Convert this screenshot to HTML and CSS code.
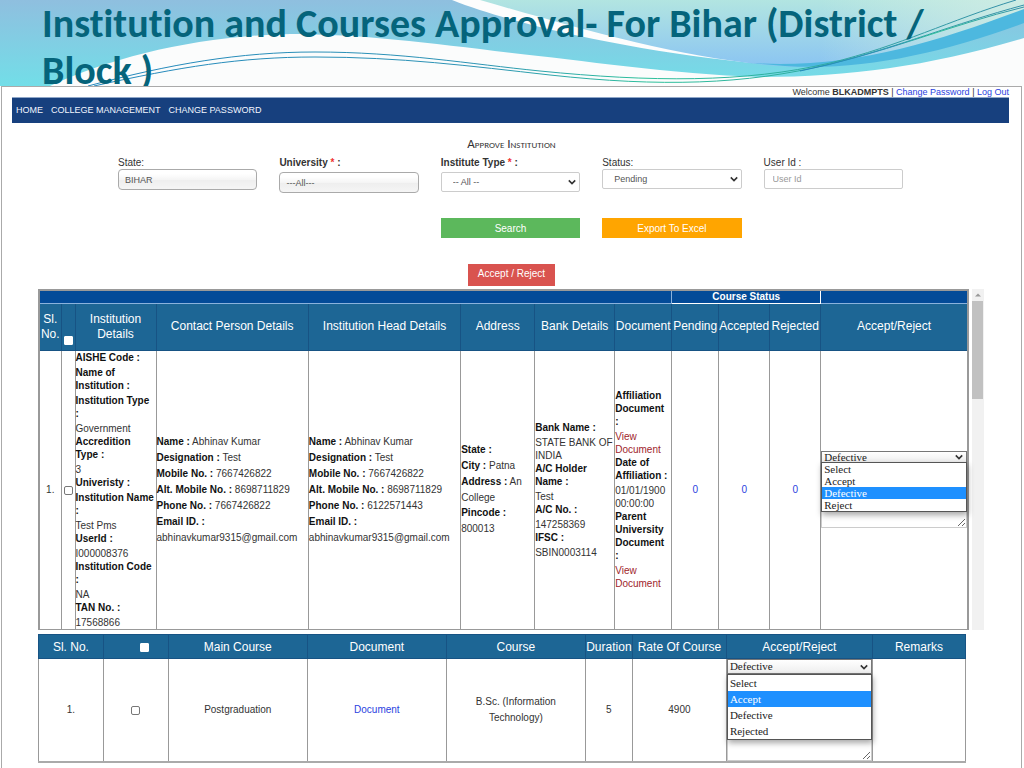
FILE: index.html
```html
<!DOCTYPE html>
<html lang="en">
<head>
<meta charset="utf-8">
<title>Institution and Courses Approval</title>
<link rel="stylesheet" href="styles.css">
</head>
<body>
<header class="banner">
  <svg class="banner-art" viewBox="0 0 1024 86" preserveAspectRatio="none" aria-hidden="true">
    <defs>
      <linearGradient id="sea" x1="0" y1="0" x2="0" y2="1"><stop offset="0" stop-color="#8fbfdf"/><stop offset="1" stop-color="#72dee8"/></linearGradient>
      <linearGradient id="sky" x1="0" y1="0" x2="0" y2="1"><stop offset="0" stop-color="#b2e5e1"/><stop offset="1" stop-color="#8ac4f2"/></linearGradient>
      <linearGradient id="pale" x1="0" y1="0" x2="1" y2="0"><stop offset="0" stop-color="#d9f0e2" stop-opacity="0"/><stop offset="1" stop-color="#d4eee4" stop-opacity=".8"/></linearGradient>
      <linearGradient id="line" x1="0" y1="0" x2="1" y2="0"><stop offset="0" stop-color="#2488bd"/><stop offset=".42" stop-color="#2c93b4"/><stop offset=".6" stop-color="#2cc09a"/><stop offset="1" stop-color="#348fa8"/></linearGradient>
    </defs>
    <path fill="url(#sea)" d="M0 0H1024V38C930 66 850 77 760 77C670 74 580 60 512 53C430 43 360 34 290 34C200 36 115 56 50 86H0Z"/>
    <path fill="#fdfdfd" d="M452 0C520 27 640 52 760 64L800 60L520 0Z"/>
    <path fill="url(#sky)" d="M480 0H1024V12C940 46 880 66 800 67C700 64 580 29 480 0Z"/>
    <path fill="url(#pale)" d="M820 0H1024V10C970 30 900 56 820 64Z"/>
    <path fill="#4db8df" d="M750 63C850 69 930 44 1024 9V23C940 54 860 71 785 66Z"/>
    <g fill="none" stroke="url(#line)" stroke-width="1">
      <path d="M88 86C170 64 240 52 315 52C400 52 470 64 540 71C650 82 745 83 830 63C900 46 950 20 1016 0"/>
      <path d="M94 86C180 67 240 57 315 57C400 57 470 66 550 75C660 87 745 85 830 64C905 45 950 25 1024 5"/>
      <path d="M800 71C880 55 950 25 1024 7"/>
    </g>
  </svg>
  <h1 class="banner-title">Institution and Courses Approval- For Bihar (District /<br>Block )</h1>
</header>

<main class="panel">
  <div class="account">Welcome <b>BLKADMPTS</b> | <a href="#">Change Password</a> | <a href="#">Log Out</a></div>
  <nav class="menu"><a href="#">HOME</a><a href="#">COLLEGE MANAGEMENT</a><a href="#">CHANGE PASSWORD</a></nav>
  <h2 class="section-title">Approve Institution</h2>

  <form class="filters">
    <div class="field"><label for="state">State:</label>
      <select id="state" class="control chosen"><option>BIHAR</option></select></div>
    <div class="field required"><label for="university">University <i>*</i> :</label>
      <select id="university" class="control chosen"><option>---All---</option></select></div>
    <div class="field required"><label for="type">Institute Type <i>*</i> :</label>
      <div class="select-wrap"><select id="type" class="control"><option>-- All --</option></select>
      <svg class="chevron" viewBox="0 0 10 6"><path d="M1 1l4 4 4-4"/></svg></div></div>
    <div class="field"><label for="status">Status:</label>
      <div class="select-wrap"><select id="status" class="control"><option>Pending</option></select>
      <svg class="chevron" viewBox="0 0 10 6"><path d="M1 1l4 4 4-4"/></svg></div></div>
    <div class="field"><label for="user">User Id :</label>
      <input id="user" class="control" type="text" placeholder="User Id"></div>
    <button class="btn search" type="button">Search</button>
    <button class="btn export" type="button">Export To Excel</button>
  </form>
  <div class="decision"><button class="btn reject" type="button">Accept / Reject</button></div>

  <div class="scroller">
    <table class="grid institutions">
      <colgroup><col class="i1"><col class="i2"><col class="i3"><col class="i4"><col class="i4"><col class="i6"><col class="i7"><col class="i8"><col class="i9"><col class="i10"><col class="i10"><col></colgroup>
      <thead>
        <tr class="group"><th colspan="8"></th><th colspan="3" class="boxed">Course Status</th><th></th></tr>
        <tr class="heads"><th>Sl.<br>No.</th><th class="tick-low"><input class="tick" type="checkbox" aria-label="Select all institutions"></th><th>Institution<br>Details</th><th>Contact Person Details</th><th>Institution Head Details</th><th>Address</th><th>Bank Details</th><th>Document</th><th>Pending</th><th>Accepted</th><th>Rejected</th><th>Accept/Reject</th></tr>
      </thead>
      <tbody>
        <tr>
          <td class="center">1.</td>
          <td class="center"><input class="tick" type="checkbox" aria-label="Select institution 1"></td>
          <td class="top">
            <b class="label">AISHE Code :</b>
            <b class="label">Name of<br>Institution :</b>
            <b class="label">Institution Type<br>:</b>Government
            <b class="label">Accredition<br>Type :</b>3
            <b class="label">Univeristy :</b>
            <b class="label">Institution Name<br>:</b>Test Pms
            <b class="label">UserId :</b>I000008376
            <b class="label">Institution Code<br>:</b>NA
            <b class="label">TAN No. :</b>17568866
          </td>
          <td class="roomy"><b>Name :</b> Abhinav Kumar<br><b>Designation :</b> Test<br><b>Mobile No. :</b> 7667426822<br><b>Alt. Mobile No. :</b> 8698711829<br><b>Phone No. :</b> 7667426822<br><b>Email ID. :</b><br>abhinavkumar9315@gmail.com</td>
          <td class="roomy"><b>Name :</b> Abhinav Kumar<br><b>Designation :</b> Test<br><b>Mobile No. :</b> 7667426822<br><b>Alt. Mobile No. :</b> 8698711829<br><b>Phone No. :</b> 6122571443<br><b>Email ID. :</b><br>abhinavkumar9315@gmail.com</td>
          <td class="roomy"><b>State :</b><br><b>City :</b> Patna<br><b>Address :</b> An<br>College<b class="label">Pincode :</b>800013</td>
          <td><b class="label">Bank Name :</b>STATE BANK OF<br>INDIA<b class="label">A/C Holder<br>Name :</b>Test<b class="label">A/C No. :</b>147258369<b class="label">IFSC :</b>SBIN0003114</td>
          <td><b class="label">Affiliation<br>Document<br>:</b><a class="view" href="#">View<br>Document</a><b class="label">Date of<br>Affiliation :</b>01/01/1900<br>00:00:00<b class="label">Parent<br>University<br>Document<br>:</b><a class="view" href="#">View<br>Document</a></td>
          <td class="center"><a href="#">0</a></td>
          <td class="center"><a href="#">0</a></td>
          <td class="center"><a href="#">0</a></td>
          <td>
            <div class="verdict">
              <div class="select-wrap"><select aria-label="Institution decision"><option>Defective</option></select>
              <svg class="chevron" viewBox="0 0 10 6"><path d="M1 1l4 4 4-4"/></svg></div>
              <ul class="options"><li>Select</li><li>Accept</li><li class="active">Defective</li><li>Reject</li></ul>
              <textarea aria-label="Institution remarks"></textarea>
            </div>
          </td>
        </tr>
        <tr><td></td><td></td><td class="top"><b class="label">AISHE Code :</b></td><td></td><td></td><td></td><td></td><td></td><td></td><td></td><td></td><td></td></tr>
      </tbody>
    </table>
    <div class="scrollbar" aria-hidden="true"><svg viewBox="0 0 12 12"><path d="M3 7.500l3-3 3 3z"/></svg><div class="thumb"></div></div>
  </div>

  <div class="course-area">
    <table class="grid courses">
      <colgroup><col class="c1"><col class="c1"><col class="c3"><col class="c4"><col class="c4"><col class="c6"><col class="c7"><col class="c8"><col></colgroup>
      <thead><tr><th>Sl. No.</th><th class="tick-right"><input class="tick" type="checkbox" aria-label="Select all courses"></th><th>Main Course</th><th>Document</th><th>Course</th><th>Duration</th><th>Rate Of Course</th><th>Accept/Reject</th><th>Remarks</th></tr></thead>
      <tbody><tr>
        <td>1.</td><td><input class="tick" type="checkbox" aria-label="Select course 1"></td><td>Postgraduation</td><td><a href="#">Document</a></td><td>B.Sc. (Information<br>Technology)</td><td>5</td><td>4900</td>
        <td>
          <div class="verdict tall">
            <div class="select-wrap"><select aria-label="Course decision"><option>Defective</option></select>
            <svg class="chevron" viewBox="0 0 10 6"><path d="M1 1l4 4 4-4"/></svg></div>
            <ul class="options"><li>Select</li><li class="active">Accept</li><li>Defective</li><li>Rejected</li></ul>
            <textarea aria-label="Course remarks"></textarea>
          </div>
        </td><td></td>
      </tr></tbody>
    </table>
  </div>
</main>
</body>
</html>
```
FILE: styles.css
```css
* { box-sizing: border-box; }
body {
  margin: 0;
  background: #fff;
  color: #333;
  font: 10px/13px "Liberation Sans", Arial, sans-serif;
}
a { color: #2a3fe0; text-decoration: none; }

.banner { position: relative; height: 86px; overflow: hidden; background: #fbfcfc; }
.banner-art { position: absolute; inset: 0; width: 100%; height: 100%; }
.banner-title {
  position: relative;
  margin: 0;
  padding-left: 42px;
  color: #05647b;
  font: bold 40px/47px Carlito, Lato, sans-serif;
  font-variant-ligatures: none;
  white-space: nowrap;
}

.panel {
  min-height: calc(100vh - 86px);
  margin: 0 2px 0 1px;
  border: solid #aaa;
  border-width: 1px 1px 0;
}
.account { margin: 0 12px 0 10px; font-size: 9px; line-height: 10px; text-align: right; }
.menu {
  display: flex;
  gap: 8px;
  margin: 0 12px 0 10px;
  padding: 0 4px;
  background: #17407e;
  border-top: 1px solid #8ea6c8;
  font-size: 9px;
  line-height: 25px;
}
.menu a { color: #f2f6ff; }
.section-title {
  margin: 12px 0 3px;
  color: #333;
  font: 13px/18px Carlito, Lato, sans-serif;
  font-variant: small-caps;
  text-align: center;
}

.filters {
  display: grid;
  grid-template-columns: repeat(5, 1fr);
  column-gap: 22px;
  row-gap: 25px;
  margin: 0 118px 0 116px;
}
.field label { display: block; }
.required label { margin-bottom: 3px; font-weight: bold; }
.required i { color: #e33; font-style: normal; }
.control {
  display: block;
  width: 100%;
  height: 20px;
  padding: 0 8px;
  border: 1px solid #ccc;
  border-radius: 2px;
  background: #fff;
  color: #555;
  font: 9px "Liberation Sans", Arial, sans-serif;
  appearance: none;
}
.select-wrap .control { padding-left: 11px; }
.control::placeholder { color: #999; }
.chosen {
  height: 21px;
  padding: 0 6px;
  border-color: #aaa;
  border-radius: 4px;
  background: linear-gradient(#fff 20%, #f5f5f5 50%, #eee 52%, #f5f5f5);
}
.select-wrap { position: relative; }
.chevron {
  position: absolute;
  top: 50%;
  right: 4px;
  width: 8px;
  height: 6px;
  margin-top: -3px;
  fill: none;
  stroke: #333;
  stroke-width: 2;
}
.btn { height: 20px; padding: 0 10px; border: 0; color: #fff; font: 10px "Liberation Sans", Arial, sans-serif; }
.search { grid-column: 3; background: #5cb85c; }
.export { grid-column: 4; background: #ffa500; }
.decision { margin: 26px 0 3px; text-align: center; }
.reject { display: inline-block; height: 22px; padding-bottom: 3px; vertical-align: top; background: #d9534f; }

.scroller { display: flex; align-items: flex-start; height: 341px; margin: 0 37px 0 36px; overflow: hidden; }
.grid { border-collapse: collapse; table-layout: fixed; width: 100%; }
.grid th { padding: 0; background: #1d6695; color: #fff; font-weight: normal; border: 1px solid #175384; }
.grid td { padding: 0; border: 1px solid #999; white-space: nowrap; }
.institutions { flex: 1; min-width: 0; border: 2px solid #999; }
.institutions .group th { height: 13px; background: #034b98; border-color: #8ab2dc; font-size: 10px; font-weight: bold; line-height: 11px; }
.institutions .group .boxed { border-color: #fff; }
.institutions .heads th { height: 47px; font-size: 12px; line-height: 15px; }
.institutions .heads .tick-low { vertical-align: bottom; }
.institutions .heads .tick-low .tick { margin-bottom: 4px; }
.institutions b { color: #111; }
.label { display: block; padding-bottom: 2px; line-height: 13px; }
.top { vertical-align: top; }
.roomy { line-height: 16px; }
.center { text-align: center; }
.view { color: #a0262c; }
.i1 { width: 22px; } .i2 { width: 14px; } .i3 { width: 81px; } .i4 { width: 16.4%; }
.i6 { width: 74px; } .i7 { width: 80px; } .i8 { width: 57px; } .i9 { width: 47px; } .i10 { width: 51px; }

.tick {
  display: inline-block;
  width: 9px;
  height: 9px;
  margin: 0;
  border: 1px solid #777;
  border-radius: 2px;
  background: #fff;
  vertical-align: middle;
  appearance: none;
}
th .tick { border-color: #fff; border-radius: 1px; }

.verdict { position: relative; color: #222; font: 11px/13px "Liberation Serif", "Times New Roman", serif; }
.verdict select {
  display: block;
  width: 100%;
  height: 12px;
  padding: 0 2px;
  border: 1px solid #777;
  border-radius: 0;
  background: linear-gradient(#fff, #eee);
  color: inherit;
  font: inherit;
  line-height: 10px;
  appearance: none;
}
.options {
  position: absolute;
  z-index: 1;
  top: 11px;
  left: 0;
  right: 0;
  margin: 0;
  padding: 0;
  border: 1px solid #555;
  background: #fff;
  box-shadow: 1px 3px 6px rgba(0, 0, 0, .35);
  list-style: none;
}
.options li { height: 12px; padding-left: 2px; line-height: 12px; text-align: left; }
.options .active { background: #1e90ff; color: #fff; }
.verdict textarea { display: block; width: 100%; height: 65px; border: 1px solid #ccc; resize: vertical; }

.scrollbar { flex: 0 0 15px; align-self: stretch; padding-left: 3px; background: linear-gradient(90deg, #fff 3px, #f1f1f1 3px); }
.scrollbar svg { display: block; width: 12px; height: 12px; fill: #999; }
.thumb { height: 98px; margin-right: 1px; background: #c1c1c1; }

.course-area { margin: 4px 55px 0 36px; }
.courses { text-align: center; line-height: 16px; border-bottom: 2px solid #aaa; }
.courses th { height: 24px; font-size: 12px; white-space: nowrap; }
.courses td { height: 103px; }
.c1 { width: 7%; } .c3 { width: 15%; } .c4 { width: 15%; } .c6 { width: 47px; } .c7 { width: 94px; } .c8 { width: 146px; }
.courses .tick-right { padding-left: 18px; }
.tall select { height: 15px; line-height: 13px; }
.tall .options { top: 15px; }
.tall .options li { height: 16px; line-height: 16px; }
.tall textarea { height: 87px; }
```
